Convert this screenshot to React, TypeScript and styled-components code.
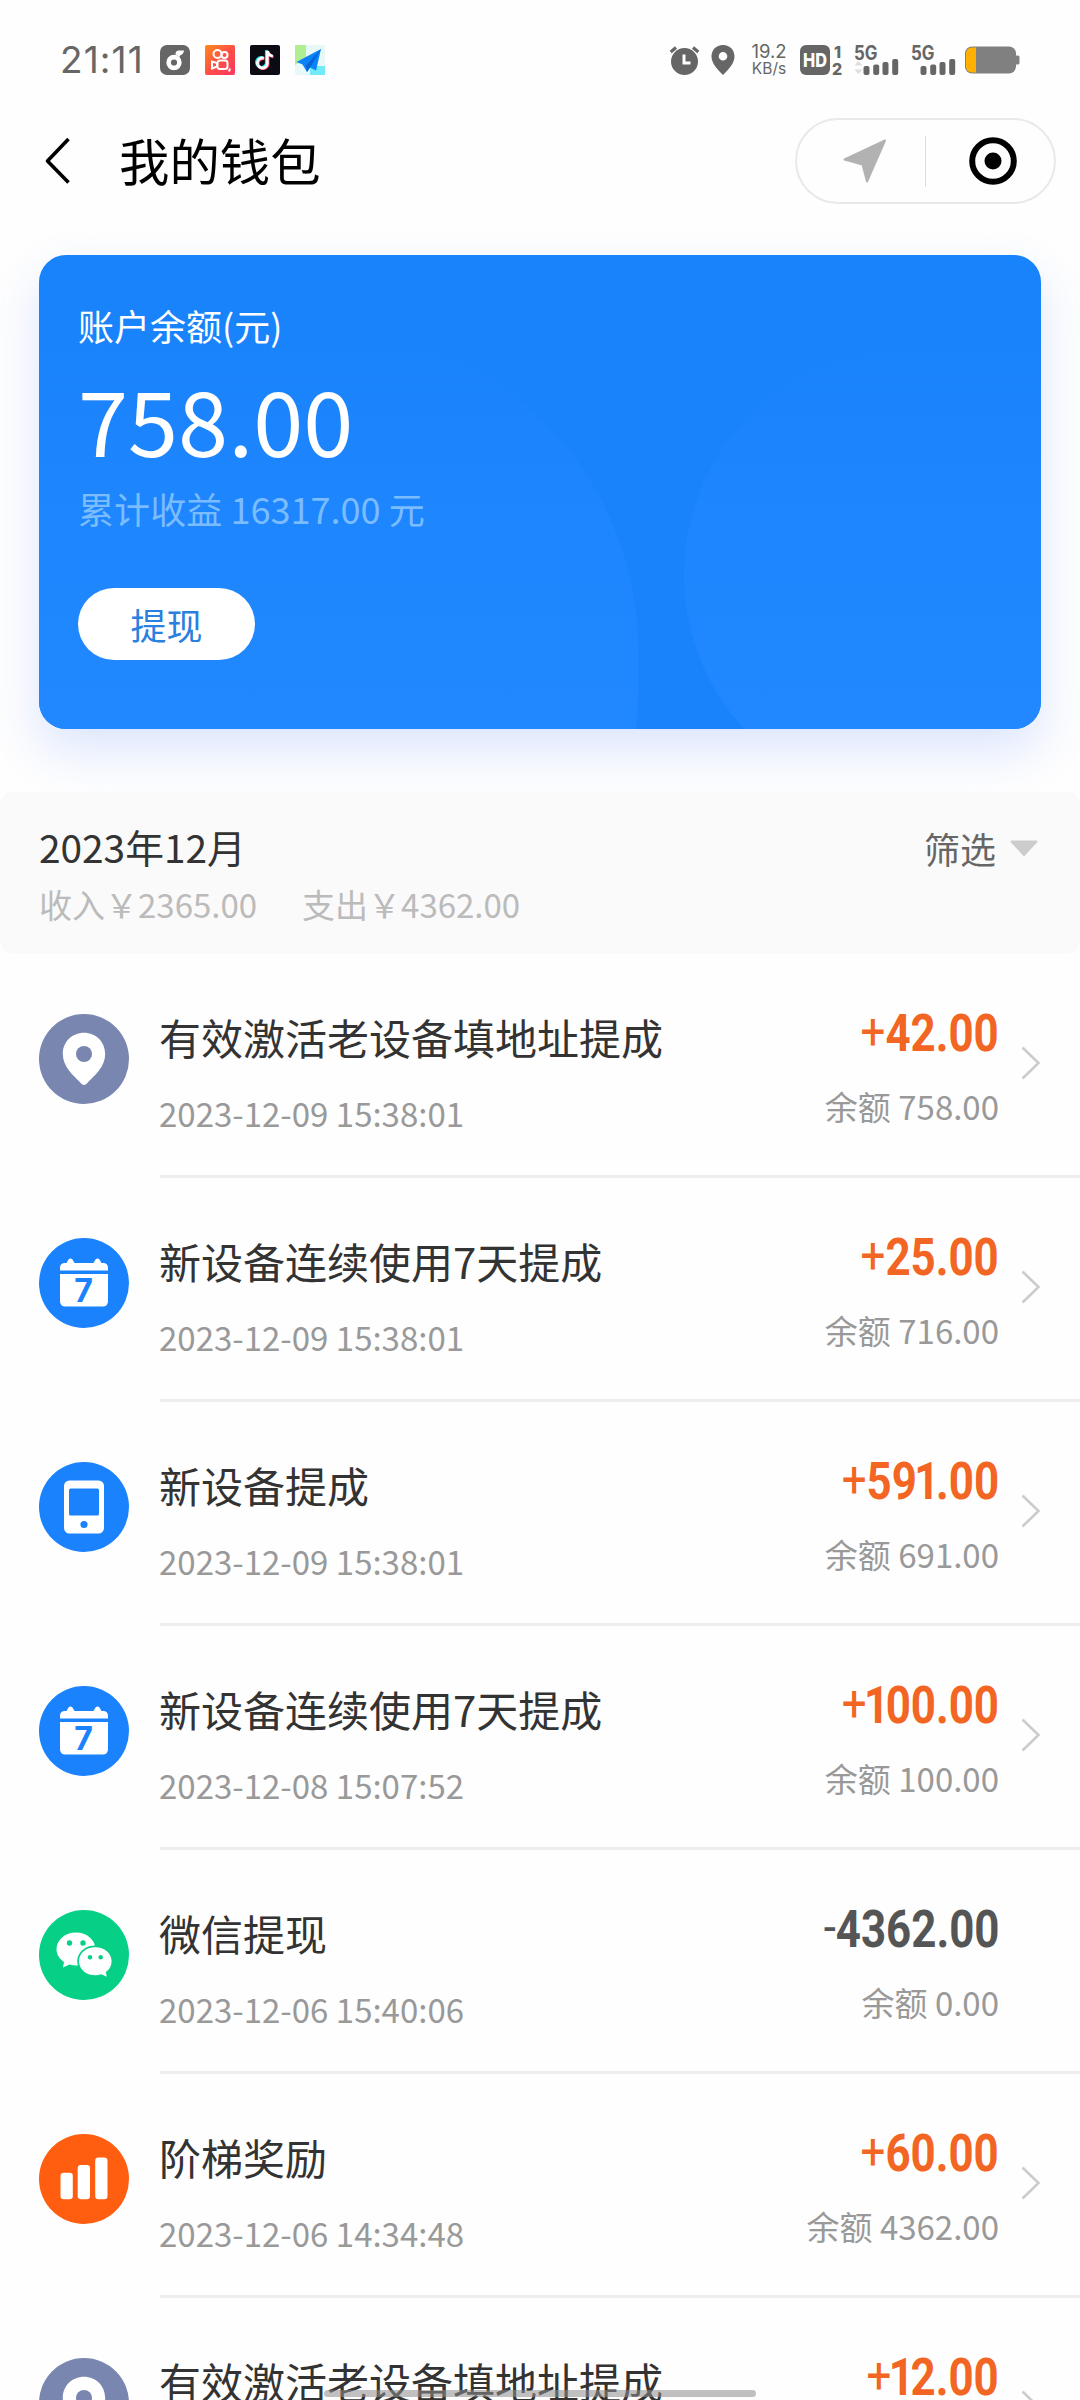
import React from 'react';
import styled, { createGlobalStyle } from 'styled-components';

const GlobalStyle = createGlobalStyle`
  * { box-sizing: border-box; }
  html, body { margin: 0; padding: 0; background: #fff; }
  body { font-family: "Noto Sans CJK SC", "Noto Sans", sans-serif; }
`;

const Screen = styled.main`
  position: relative;
  width: 1080px;
  height: 2400px;
  overflow: hidden;
  background: #fefefe;
`;

/* ---------- status bar ---------- */

const StatusBar = styled.header`
  display: flex;
  align-items: center;
  justify-content: space-between;
  height: 118px;
  padding: 2px 60px 0 60px;
  color: #666;
`;

const StatusLeft = styled.div`
  display: flex;
  align-items: center;
  gap: 15px;
`;

const Clock = styled.span`
  width: 85px;
  font: 400 37px/46px Inter, sans-serif;
  letter-spacing: 1.1px;
  white-space: nowrap;
`;

const StatusRight = styled.div`
  display: flex;
  align-items: center;
`;

const Glyph = styled.svg<{ $ml?: number }>`
  display: block;
  flex: none;
  margin-left: ${(p) => p.$ml ?? 0}px;
  overflow: visible;
`;

const NetSpeed = styled.div`
  width: 36px;
  margin-left: 16px;
  display: flex;
  flex-direction: column;
  align-items: center;
  font: 400 18.5px/17px Inter, sans-serif;
  white-space: nowrap;
  span:last-child {
    font-size: 15.5px;
  }
`;

/* ---------- navigation ---------- */

const NavBar = styled.nav`
  display: flex;
  align-items: center;
  height: 86px;
  padding: 0 24px 0 45px;
`;

const NavTitle = styled.h1`
  flex: 1;
  margin: -3px 0 0 48px;
  font-size: 50.4px;
  line-height: 60px;
  font-weight: 400;
  color: #000;
`;

const Capsule = styled.div`
  display: flex;
  align-items: center;
  width: 261px;
  height: 86px;
  border: 2px solid #e9e9e9;
  border-radius: 43px;
`;

const CapsuleHalf = styled.div`
  flex: 1;
  display: flex;
  justify-content: center;
  & + & {
    border-left: 1px solid #dcdcdc;
  }
  height: 51px;
  align-items: center;
`;

/* ---------- balance card ---------- */

const Card = styled.section`
  position: relative;
  display: flex;
  flex-direction: column;
  align-items: flex-start;
  height: 474px;
  margin: 51px 39px 0;
  padding: 46px 39px 0;
  border-radius: 27px;
  background: #1983fc;
  color: #fff;
  box-shadow: 0 22px 50px rgba(40, 100, 250, 0.16);
`;

const CardPattern = styled.svg`
  position: absolute;
  inset: 0;
  border-radius: 27px;
`;

const CardLabel = styled.div`
  position: relative;
  font-size: 36px;
  line-height: 48px;
`;

const CardAmount = styled.div`
  position: relative;
  margin-top: 19px;
  font-size: 90.2px;
  line-height: 100px;
`;

const CardTotal = styled.div`
  position: relative;
  margin-top: 16px;
  font-size: 36.1px;
  line-height: 48px;
  color: #7bbcff;
`;

const WithdrawButton = styled.button`
  position: relative;
  width: 177px;
  height: 72px;
  margin-top: 56px;
  padding: 0;
  border: 0;
  border-radius: 36px;
  background: #fff;
  color: #2b7fdf;
  font: 400 36px/48px "Noto Sans CJK SC", sans-serif;
`;

/* ---------- month summary ---------- */

const Summary = styled.section`
  position: relative;
  display: flex;
  justify-content: space-between;
  height: 162px;
  margin-top: 63px;
  padding: 29px 42px 0 39px;
  border-radius: 14px;
  background: #fafafa;
`;

const Month = styled.div`
  font-size: 38.8px;
  line-height: 50px;
  color: #333;
`;

const Totals = styled.div`
  display: flex;
  gap: 45px;
  margin-top: 13px;
  font-size: 33px;
  line-height: 40px;
  color: #bbb;
`;

const Filter = styled.div`
  display: flex;
  align-items: center;
  gap: 14px;
  height: 50px;
  margin-top: 2px;
  font-size: 36px;
  line-height: 50px;
  color: #666;
`;

/* ---------- transactions ---------- */

const List = styled.ul`
  margin: 0;
  padding: 0;
  list-style: none;
`;

const Row = styled.li`
  display: flex;
  height: 224px;
  padding-left: 39px;
`;

const Badge = styled.svg`
  flex: none;
  display: block;
  width: 90px;
  height: 90px;
  margin: 60px 31px 0 0;
`;

const RowBody = styled.div`
  flex: 1;
  display: flex;
  border-bottom: 3px solid #eee;
`;

const Info = styled.div`
  flex: 1;
  padding-top: 59px;
  margin-left: -1px;
`;

const RowTitle = styled.div`
  font-size: 42px;
  line-height: 48px;
  color: #333;
  white-space: nowrap;
`;

const RowTime = styled.div`
  margin-top: 32px;
  font-size: 33px;
  line-height: 40px;
  color: #999;
`;

const Money = styled.div`
  display: flex;
  flex-direction: column;
  align-items: flex-end;
  padding-top: 56px;
`;

const Amount = styled.div<{ $out: boolean }>`
  font: 700 51px/48px Roboto, sans-serif;
  color: ${(p) => (p.$out ? '#555' : '#f26522')};
  transform: scaleX(0.86);
  transform-origin: right;
  white-space: nowrap;
`;

const Sign = styled.span`
  font-weight: 400;
  position: relative;
  top: -2px;
`;

const NarrowOne = styled.span`
  margin: 0 -4px 0 -3px;
`;

const Balance = styled.div`
  margin-top: 28px;
  font-size: 33px;
  line-height: 40px;
  color: #999;
`;

const RowArrow = styled.div`
  width: 81px;
  padding: 92px 0 0 22px;
`;

const HomeIndicator = styled.div`
  position: absolute;
  left: 324px;
  bottom: 3px;
  width: 432px;
  height: 7px;
  border-radius: 4px;
  background: rgba(140, 140, 140, 0.55);
`;

type Kind = 'pin' | 'calendar' | 'phone' | 'wechat' | 'bars';

const badgeColor: Record<Kind, string> = {
  pin: '#7886b0',
  calendar: '#1a82fd',
  phone: '#1a82fd',
  wechat: '#05d085',
  bars: '#ff5d0f',
};

const BadgeArt = ({ kind }: { kind: Kind }) => {
  const color = badgeColor[kind];
  return (
    <Badge viewBox="0 0 90 90">
      <circle cx="45" cy="45" r="45" fill={color} />
      {kind === 'pin' && (
        <>
          <path
            d="M45 18.7C33 18.7 23.8 28 23.8 39.8C23.8 53 34 61 42.6 70Q45 72.2 47.4 70C56 61 66.2 53 66.2 39.8C66.2 28 57 18.7 45 18.7Z"
            fill="#fff"
          />
          <circle cx="45" cy="40" r="8" fill={color} />
        </>
      )}
      {kind === 'calendar' && (
        <>
          <path d="M21 32.5V30Q21 25 26 25H27.5L29.5 21.5Q31.5 19.5 33.5 21.5L35.5 25H54.5L56.5 21.5Q58.5 19.5 60.5 21.5L62.5 25H64Q69 25 69 30V32.5Z" fill="#fff" />
          <path d="M21 36H69V63Q69 68.5 63.5 68.5H26.5Q21 68.5 21 63Z" fill="#fff" />
          <text x="44.5" y="63.5" textAnchor="middle" fontFamily="Inter, sans-serif" fontWeight="700" fontSize="32" fill={color}>
            7
          </text>
        </>
      )}
      {kind === 'phone' && (
        <>
          <rect x="25" y="18.5" width="40" height="53" rx="5.5" fill="#fff" />
          <rect x="30" y="26.5" width="30" height="27" rx="1.5" fill={color} />
          <circle cx="45" cy="62.5" r="3.6" fill={color} />
        </>
      )}
      {kind === 'wechat' && (
        <>
          <path d="M37 22.5C26 22.5 17.5 30 17.5 39.3C17.5 44.5 20.3 48.8 25 52L24 57.5L30.5 54.5Q34 55.5 38 55.5C48.5 55.5 56.5 48.5 56.5 39.3C56.5 30 48 22.5 37 22.5Z" fill="#fff" />
          <path
            d="M56.3 37.3C47 37.3 40 43.5 40 51.2C40 59 47 65.2 56.3 65.2Q59.5 65.2 62.3 64.2L67.8 66.8L66.8 62C70.5 59.5 72.6 55.7 72.6 51.2C72.6 43.5 65.5 37.3 56.3 37.3Z"
            fill="#fff"
            stroke={color}
            strokeWidth="3.5"
            paintOrder="stroke"
          />
          <circle cx="30.5" cy="33" r="2.7" fill={color} />
          <circle cx="44" cy="33" r="2.7" fill={color} />
          <circle cx="51" cy="47.3" r="2.2" fill={color} />
          <circle cx="61.7" cy="47.3" r="2.2" fill={color} />
        </>
      )}
      {kind === 'bars' && (
        <g fill="#fff">
          <rect x="21.5" y="38.7" width="12.3" height="26.6" rx="3.2" />
          <rect x="38.7" y="31" width="12.3" height="34.3" rx="3.2" />
          <rect x="56.2" y="23.5" width="12.3" height="41.8" rx="3.2" />
        </g>
      )}
    </Badge>
  );
};

const Signal = ({ ml, arrows }: { ml: number; arrows?: boolean }) => (
  <Glyph $ml={ml} width="45" height="30" viewBox="0 0 45 30" fill="#666">
    <text x="0" y="14.5" fontFamily="Inter, sans-serif" fontWeight="700" fontSize="19.5" textLength="23.5" lengthAdjust="spacingAndGlyphs">
      5G
    </text>
    {arrows && <path d="M0.5 20.5L4.5 16L8.5 20.5ZM0.5 24.5H8.5L4.5 29Z" fill="#ddd" />}
    <rect x="9.5" y="21" width="6" height="9" rx="2" />
    <rect x="19.2" y="19.5" width="6" height="10.5" rx="2" />
    <rect x="28.5" y="17" width="6" height="13" rx="2" />
    <rect x="38.2" y="14" width="6" height="16" rx="2" />
  </Glyph>
);

interface Tx {
  kind: Kind;
  title: string;
  time: string;
  amount: string;
  balance: string;
  arrow?: boolean;
}

const transactions: Tx[] = [
  { kind: 'pin', title: '有效激活老设备填地址提成', time: '2023-12-09 15:38:01', amount: '+42.00', balance: '758.00', arrow: true },
  { kind: 'calendar', title: '新设备连续使用7天提成', time: '2023-12-09 15:38:01', amount: '+25.00', balance: '716.00', arrow: true },
  { kind: 'phone', title: '新设备提成', time: '2023-12-09 15:38:01', amount: '+591.00', balance: '691.00', arrow: true },
  { kind: 'calendar', title: '新设备连续使用7天提成', time: '2023-12-08 15:07:52', amount: '+100.00', balance: '100.00', arrow: true },
  { kind: 'wechat', title: '微信提现', time: '2023-12-06 15:40:06', amount: '-4362.00', balance: '0.00' },
  { kind: 'bars', title: '阶梯奖励', time: '2023-12-06 14:34:48', amount: '+60.00', balance: '4362.00', arrow: true },
  { kind: 'pin', title: '有效激活老设备填地址提成', time: '', amount: '+12.00', balance: '', arrow: true },
];

/* The digit 1 takes less room than the other digits. */
const Figures = ({ value }: { value: string }) => {
  const [head, ...rest] = value.split('1');
  return (
    <>
      {head}
      {rest.map((part, i) => (
        <React.Fragment key={i}>
          <NarrowOne>1</NarrowOne>
          {part}
        </React.Fragment>
      ))}
    </>
  );
};

const StatusIcons = () => (
  <StatusRight>
    <Glyph width="30" height="30" viewBox="0 0 30 30">
      <circle cx="14.5" cy="16.5" r="13.5" fill="#666" />
      <path d="M0.7 7L6 2.5M28.3 7L23 2.5" stroke="#666" strokeWidth="3.2" />
      <path d="M14 9.5V18H20.5" stroke="#fff" strokeWidth="3" fill="none" />
    </Glyph>
    <Glyph $ml={11} width="24" height="30" viewBox="0 0 24 30">
      <path fillRule="evenodd" d="M12 0C5 0 .5 5 .5 11.5C.5 18 6 24 12 30C18 24 23.5 18 23.5 11.5C23.5 5 19 0 12 0ZM12 7A4.3 4.3 0 1 1 12 15.6A4.3 4.3 0 1 1 12 7Z" fill="#666" />
    </Glyph>
    <NetSpeed>
      <span>19.2</span>
      <span>KB/s</span>
    </NetSpeed>
    <Glyph $ml={13} width="44" height="30" viewBox="0 0 44 30" fill="#666" fontFamily="Inter, sans-serif">
      <rect width="30" height="30" rx="6" />
      <text x="3" y="22" fontWeight="800" fontSize="19" fill="#fff" textLength="24" lengthAdjust="spacingAndGlyphs">
        HD
      </text>
      <text x="34" y="12.5" fontWeight="800" fontSize="16">1</text>
      <text x="32" y="29.5" fontWeight="800" fontSize="16">2</text>
    </Glyph>
    <Signal ml={10} arrows />
    <Signal ml={12} />
    <Glyph $ml={9} width="55" height="28" viewBox="0 0 55 28">
      <rect x="0" y="0.5" width="51" height="27" rx="7" fill="#808080" />
      <rect x="50" y="9.5" width="4.5" height="9" rx="1.5" fill="#808080" />
      <path d="M11 1.5H7.5Q1 1.5 1 8V20Q1 26.5 7.5 26.5H11Z" fill="#ffb000" />
    </Glyph>
  </StatusRight>
);

const AppIcons = () => (
  <>
    <Glyph width="30" height="30" viewBox="0 0 30 30">
      <rect width="30" height="30" rx="7" fill="#666" />
      <path d="M15.5 9.5V8Q16 5.5 18.5 5.5H24Q23.5 9.5 20 10.5L19.5 12Z" fill="#fff" />
      <circle cx="14" cy="17.5" r="5.4" fill="none" stroke="#fff" strokeWidth="4.6" />
    </Glyph>
    <Glyph width="30" height="30" viewBox="0 0 30 30">
      <defs>
        <linearGradient id="ks" x1="0" y1="0" x2="1" y2="1">
          <stop offset="0" stopColor="#ff8a1c" />
          <stop offset=".5" stopColor="#ff4f44" />
          <stop offset="1" stopColor="#fb3763" />
        </linearGradient>
      </defs>
      <rect width="30" height="30" rx="2" fill="url(#ks)" />
      <g fill="none" stroke="#fff" strokeWidth="2">
        <circle cx="12.5" cy="9" r="4" />
        <circle cx="19.5" cy="10" r="3" />
        <rect x="12.5" y="15.5" width="10" height="8.5" rx="2.5" />
        <path d="M12 18L7 16.5V23.5L12 21.5Z" />
        <path d="M25 23.5L24 26.5" />
      </g>
    </Glyph>
    <Glyph width="30" height="30" viewBox="0 0 30 30">
      <rect width="30" height="30" rx="2" fill="#0b0b14" />
      <g fill="none" strokeWidth="2.8">
        <path d="M13.8 13.2A5 5 0 1 0 17.3 19V6Q18.5 10.5 22.8 11.2" stroke="#25e4e4" transform="translate(-1 -.7)" />
        <path d="M13.8 13.2A5 5 0 1 0 17.3 19V6Q18.5 10.5 22.8 11.2" stroke="#fb3b62" transform="translate(.8 .7)" />
        <path d="M13.8 13.2A5 5 0 1 0 17.3 19V6Q18.5 10.5 22.8 11.2" stroke="#fff" />
      </g>
    </Glyph>
    <Glyph width="30" height="30" viewBox="0 0 30 30">
      <rect width="30" height="30" rx="2" fill="#e6f8f8" />
      <path d="M0 0H11V13L0 20Z" fill="#b0ee94" />
      <path d="M15 30V21H30V30Z" fill="#72eafa" />
      <path d="M26 4L1.5 17L7.5 19.5L12 27L15 22.5L21 25.5Z" fill="#0b82fa" />
      <path d="M26 4L11 20.5L12 27L15 22.5Z" fill="#0664d4" />
    </Glyph>
  </>
);

export default function App() {
  return (
    <>
      <GlobalStyle />
      <Screen>
        <StatusBar>
          <StatusLeft>
            <Clock>21:11</Clock>
            <AppIcons />
          </StatusLeft>
          <StatusIcons />
        </StatusBar>

        <NavBar>
          <Glyph width="26" height="48" viewBox="0 0 26 48">
            <path d="M23.5 2L2.5 24L23.5 45.5" fill="none" stroke="#000" strokeWidth="3.6" strokeLinejoin="round" />
          </Glyph>
          <NavTitle>我的钱包</NavTitle>
          <Capsule>
            <CapsuleHalf>
              <Glyph $ml={8} width="44" height="44" viewBox="0 0 44 44">
                <path d="M42 1.5L1.5 20.5L19.5 25.5L24 42.5Z" fill="#b2b2b2" stroke="#b2b2b2" strokeWidth="2" strokeLinejoin="round" />
              </Glyph>
            </CapsuleHalf>
            <CapsuleHalf>
              <Glyph $ml={6} width="48" height="48" viewBox="0 0 48 48">
                <circle cx="24" cy="24" r="20.8" fill="none" stroke="#000" strokeWidth="6" />
                <circle cx="24" cy="24" r="8.5" />
              </Glyph>
            </CapsuleHalf>
          </Capsule>
        </NavBar>

        <Card>
          <CardPattern width="1002" height="474" viewBox="0 0 1002 474">
            <defs>
              <linearGradient id="glow" gradientUnits="userSpaceOnUse" x1="0" y1="70" x2="0" y2="474">
                <stop offset="0" stopColor="#2389ff" stopOpacity="0" />
                <stop offset=".7" stopColor="#2188ff" stopOpacity=".8" />
                <stop offset="1" stopColor="#2188ff" />
              </linearGradient>
            </defs>
            <path d="M0 70H274A325 325 0 0 1 599 395Q600 440 597 474H0Z" fill="url(#glow)" />
            <path d="M705 474A228 228 0 0 1 873 92H1002V474Z" fill="url(#glow)" />
          </CardPattern>
          <CardLabel>账户余额(元)</CardLabel>
          <CardAmount>758.00</CardAmount>
          <CardTotal>累计收益 16317.00 元</CardTotal>
          <WithdrawButton>提现</WithdrawButton>
        </Card>

        <Summary>
          <div>
            <Month>2023年12月</Month>
            <Totals>
              <span>收入￥2365.00</span>
              <span>支出￥4362.00</span>
            </Totals>
          </div>
          <Filter>
            筛选
            <Glyph width="28" height="17" viewBox="0 0 28 17">
              <path d="M1.5 1.5H26.5L14 15Z" fill="#ccc" stroke="#ccc" strokeWidth="2" strokeLinejoin="round" />
            </Glyph>
          </Filter>
        </Summary>

        <List>
          {transactions.map((tx, i) => (
            <Row key={i}>
              <BadgeArt kind={tx.kind} />
              <RowBody>
                <Info>
                  <RowTitle>{tx.title}</RowTitle>
                  <RowTime>{tx.time}</RowTime>
                </Info>
                <Money>
                  <Amount $out={tx.amount[0] === '-'}>
                    <Sign>{tx.amount[0]}</Sign>
                    <Figures value={tx.amount.slice(1)} />
                  </Amount>
                  {tx.balance && <Balance>余额 {tx.balance}</Balance>}
                </Money>
                <RowArrow>
                  {tx.arrow && (
                    <Glyph width="20" height="34" viewBox="0 0 20 34">
                      <path d="M1.5 1.5L17.5 17L1.5 32.5" fill="none" stroke="#ccc" strokeWidth="2.6" />
                    </Glyph>
                  )}
                </RowArrow>
              </RowBody>
            </Row>
          ))}
        </List>
        <HomeIndicator />
      </Screen>
    </>
  );
}
